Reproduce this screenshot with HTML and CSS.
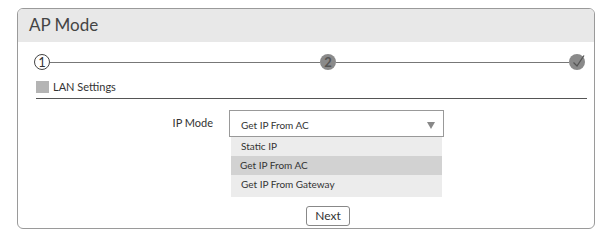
FILE: index.html
```html
<!DOCTYPE html>
<html>
<head>
    <link rel="stylesheet" href="styles.css">
    <title>AP Mode</title>
</head>
<body>
    <div class="panel">
        <div class="panel-head">AP Mode</div>

        <div class="steps">
            <span class="step step-open">1</span>
            <span class="step-line first"></span>
            <span class="step step-done">2</span>
            <span class="step-line"></span>
            <span class="step step-done">
                <svg width="16" height="16" viewBox="0 0 16 16"><path d="M4.5 8.5 L8 12 L15 1.5" fill="none" stroke="#555" stroke-width="1.3"/></svg>
            </span>
        </div>

        <div class="section-title">
            <span class="section-mark"></span>LAN Settings
        </div>

        <div class="form-row">
            <label class="form-label">IP Mode</label>
            <div class="select-wrap">
                <div class="select-box">
                    <span>Get IP From AC</span>
                    <span class="select-arrow"></span>
                </div>
                <ul class="select-menu">
                    <li>Static IP</li>
                    <li class="active">Get IP From AC</li>
                    <li>Get IP From Gateway</li>
                </ul>
            </div>
        </div>

        <div class="actions">
            <button type="button" class="btn">Next</button>
        </div>
    </div>
</body>
</html>
```

FILE: styles.css
```css
* {
    margin: 0;
    padding: 0;
    box-sizing: border-box;
}

body {
    font-family: Lato, "Open Sans", Arial, sans-serif;
    background-color: #fff;
    color: #333;
}

/* Main panel */
.panel {
    margin: 8px 0 0 17px;
    width: 578px;
    height: 221px;
    border: 1px solid #9a9a9a;
    border-radius: 6px;
    overflow: hidden;
}

.panel-head {
    height: 33px;
    background-color: #e8e8e8;
    padding-left: 11px;
    font-size: 17px;
    line-height: 32px;
    color: #444;
}

/* Wizard steps */
.steps {
    display: flex;
    align-items: center;
    margin: 12px 9px 0 16px;
    height: 16px;
}

.step {
    width: 16px;
    height: 16px;
    border-radius: 50%;
    display: flex;
    align-items: center;
    justify-content: center;
    font-size: 13px;
    flex-shrink: 0;
}

.step-open {
    border: 1px solid #444;
    color: #333;
}

.step-done {
    background-color: #8a8a8a;
    color: #555;
    font-weight: bold;
}

.step-line {
    height: 1px;
    background-color: #777;
    flex: 1;
}

.step-line.first {
    flex: none;
    width: 270px;
}

/* Section */
.section-title {
    display: flex;
    align-items: flex-end;
    margin: 4px 7px 0 18px;
    height: 25px;
    padding-bottom: 5px;
    border-bottom: 1px solid #555;
    font-size: 11px;
    line-height: 12px;
    color: #333;
}

.section-mark {
    width: 13px;
    height: 12px;
    background-color: #b4b4b4;
    margin-right: 4px;
}

/* Form */
.form-row {
    display: flex;
    margin-top: 11px;
}

.form-label {
    width: 211px;
    text-align: right;
    font-size: 11px;
    color: #333;
    line-height: 26px;
    padding-right: 16px;
}

.select-wrap {
    position: relative;
}

.select-box {
    width: 215px;
    height: 27px;
    border: 1px solid #999;
    display: flex;
    align-items: center;
    justify-content: space-between;
    padding: 3px 8px 0 11px;
    font-size: 10px;
}

.select-arrow {
    width: 0;
    height: 0;
    border-left: 4px solid transparent;
    border-right: 4px solid transparent;
    border-top: 7px solid #888;
}

.select-menu {
    position: absolute;
    top: 27px;
    left: 2px;
    width: 211px;
    list-style: none;
    background-color: #ececec;
    font-size: 10px;
    padding-bottom: 3px;
}

.select-menu li {
    height: 19px;
    line-height: 19px;
    padding-left: 10px;
}

.select-menu li.active {
    background-color: #d2d2d2;
    padding-left: 9px;
}

/* Buttons */
.actions {
    padding-left: 288px;
    margin-top: 67px;
}

.btn {
    width: 44px;
    height: 20px;
    border: 1px solid #888;
    border-radius: 3px;
    background-color: #fff;
    font-family: inherit;
    font-size: 12px;
    color: #333;
}
```
